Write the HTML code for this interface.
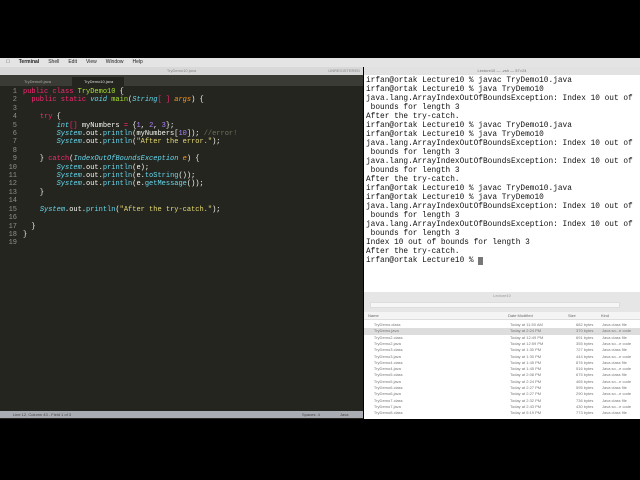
<!DOCTYPE html>
<html><head><meta charset="utf-8"><style>
*{margin:0;padding:0;box-sizing:border-box}
body{width:640px;height:480px;background:#000;position:relative;overflow:hidden;font-family:"Liberation Sans",sans-serif}
.abs{position:absolute}
#menu{left:0;top:58px;width:640px;height:9px;background:#e4e4e4;font-size:5px;line-height:9px;color:#222}
#menu span{margin-right:9px}
#ed{left:0;top:67px;width:363px;height:352px;background:#24251f}
#edtitle{left:0;top:0;width:363px;height:8px;background:#d8d8d8;font-size:4px;color:#888;text-align:center;line-height:8px}
#tabs{left:0;top:8px;width:363px;height:11px;background:#3a3b35}
.tab{position:absolute;top:2px;height:9px;font-size:4px;line-height:9px;color:#aaa;padding-left:12px}
#code{left:0;top:88px;width:363px;font-family:"Liberation Mono",monospace;font-size:7px;line-height:8.4px;color:#f8f8f2;white-space:pre}
.ln{display:inline-block;width:17px;text-align:right;color:#8f908a;margin-right:6px}
.k{color:#f92672}.t{color:#66d9ef;font-style:italic}.s{color:#e6db74}.n{color:#ae81ff}.g{color:#a6e22e}.c{color:#75715e}.o{color:#fd971f;font-style:italic}
#status{left:0;top:411px;width:363px;height:7px;background:#a9acb3;font-size:4px;line-height:7px;color:#444}
#term{left:364px;top:67px;width:276px;height:225px;background:#fff}
#ttitle{left:0;top:0;width:276px;height:8px;background:#e2e2e2;font-size:4px;color:#777;text-align:center;line-height:8px}
#ttext{left:366px;top:77px;font-family:"Liberation Mono",monospace;font-size:7.8px;line-height:9px;color:#111;white-space:pre}
#fin{left:364px;top:292px;width:276px;height:127px;background:#fff}
#fhead{left:0;top:0;width:276px;height:20px;background:#e6e6e6}
#fcol{left:0;top:20px;width:276px;height:8px;background:#f4f4f4;border-bottom:1px solid #ddd;font-size:4px;line-height:8px;color:#666}
.row{position:absolute;left:0;width:276px;height:6.3px;font-size:4px;line-height:6.3px;color:#777;white-space:pre}
.row b{font-weight:normal;position:absolute;left:146px}
.row i{font-style:normal;position:absolute;left:212px}
.row u{text-decoration:none;position:absolute;left:238px}
</style></head><body>
<div id="menu" class="abs"><span style="margin-left:6px">&#63743;</span><span style="font-weight:bold">Terminal</span><span>Shell</span><span>Edit</span><span>View</span><span>Window</span><span>Help</span></div>
<div id="ed" class="abs">
<div id="edtitle" class="abs">TryDemo10.java<span style="position:absolute;right:3px">UNREGISTERED</span></div>
<div id="tabs" class="abs"><div class="tab" style="left:12px;width:60px">TryDemo9.java</div><div class="tab" style="left:72px;width:52px;background:#24251f;color:#ddd">TryDemo10.java</div></div>
</div>
<div id="code" class="abs"><span class="ln">1</span><span class="k">public class</span> <span class="g">TryDemo10</span> {
<span class="ln">2</span>  <span class="k">public static</span> <span class="t">void</span> <span class="g">main</span>(<span class="t">String</span><span class="k">[ ]</span> <span class="o">args</span>) {
<span class="ln">3</span>
<span class="ln">4</span>    <span class="k">try</span> {
<span class="ln">5</span>        <span class="t">int</span><span class="k">[]</span> myNumbers <span class="k">=</span> {<span class="n">1</span>, <span class="n">2</span>, <span class="n">3</span>};
<span class="ln">6</span>        <span class="t">System</span>.out.<span class="t" style="font-style:normal">println</span>(myNumbers[<span class="n">10</span>]); <span class="c">//error!</span>
<span class="ln">7</span>        <span class="t">System</span>.out.<span class="t" style="font-style:normal">println</span>(<span class="s">"After the error."</span>);
<span class="ln">8</span>
<span class="ln">9</span>    } <span class="k">catch</span>(<span class="t">IndexOutOfBoundsException</span> <span class="o">e</span>) {
<span class="ln">10</span>        <span class="t">System</span>.out.<span class="t" style="font-style:normal">println</span>(e);
<span class="ln">11</span>        <span class="t">System</span>.out.<span class="t" style="font-style:normal">println</span>(e.<span class="t" style="font-style:normal">toString</span>());
<span class="ln">12</span>        <span class="t">System</span>.out.<span class="t" style="font-style:normal">println</span>(e.<span class="t" style="font-style:normal">getMessage</span>());
<span class="ln">13</span>    }
<span class="ln">14</span>
<span class="ln">15</span>    <span class="t">System</span>.out.<span class="t" style="font-style:normal">println</span>(<span class="s">"After the try-catch."</span>);
<span class="ln">16</span>
<span class="ln">17</span>  }
<span class="ln">18</span>}
<span class="ln">19</span></div>
<div id="status" class="abs"><span style="margin-left:13px">Line 12, Column 43 - Field 1 of 3</span><span style="position:absolute;left:302px">Spaces: 4</span><span style="position:absolute;left:340px">Java</span></div>
<div id="term" class="abs"><div id="ttitle" class="abs">Lecture10 — -zsh — 57×24</div></div>
<div id="ttext" class="abs">irfan@ortak Lecture10 % javac TryDemo10.java
irfan@ortak Lecture10 % java TryDemo10
java.lang.ArrayIndexOutOfBoundsException: Index 10 out of
 bounds for length 3
After the try-catch.
irfan@ortak Lecture10 % javac TryDemo10.java
irfan@ortak Lecture10 % java TryDemo10
java.lang.ArrayIndexOutOfBoundsException: Index 10 out of
 bounds for length 3
java.lang.ArrayIndexOutOfBoundsException: Index 10 out of
 bounds for length 3
After the try-catch.
irfan@ortak Lecture10 % javac TryDemo10.java
irfan@ortak Lecture10 % java TryDemo10
java.lang.ArrayIndexOutOfBoundsException: Index 10 out of
 bounds for length 3
java.lang.ArrayIndexOutOfBoundsException: Index 10 out of
 bounds for length 3
Index 10 out of bounds for length 3
After the try-catch.
irfan@ortak Lecture10 % <span style="background:#777">&nbsp;</span></div>
<div id="fin" class="abs">
<div id="fhead" class="abs"><div style="position:absolute;top:1px;width:276px;text-align:center;font-size:4px;color:#999">Lecture10</div>
<div style="position:absolute;left:6px;top:10px;width:250px;height:6px;background:#f6f6f6;border:1px solid #ddd"></div></div>
<div id="fcol" class="abs"><span style="margin-left:4px">Name</span><span style="position:absolute;left:144px">Date Modified</span><span style="position:absolute;left:204px">Size</span><span style="position:absolute;left:237px">Kind</span></div>
<div class="row" style="top:30px">         TryDemo.class<b>Today at 11:50 AM</b><i>682 bytes</i><u>Java class file</u></div>
<div class="row" style="top:36.3px;background:#ddd">         TryDemo.java<b>Today at 2:24 PM</b><i>370 bytes</i><u>Java so...e code</u></div>
<div class="row" style="top:42.6px">         TryDemo2.class<b>Today at 12:49 PM</b><i>691 bytes</i><u>Java class file</u></div>
<div class="row" style="top:48.9px">         TryDemo2.java<b>Today at 12:59 PM</b><i>355 bytes</i><u>Java so...e code</u></div>
<div class="row" style="top:55.2px">         TryDemo3.class<b>Today at 1:30 PM</b><i>727 bytes</i><u>Java class file</u></div>
<div class="row" style="top:61.5px">         TryDemo3.java<b>Today at 1:30 PM</b><i>444 bytes</i><u>Java so...e code</u></div>
<div class="row" style="top:67.8px">         TryDemo4.class<b>Today at 1:45 PM</b><i>876 bytes</i><u>Java class file</u></div>
<div class="row" style="top:74.1px">         TryDemo4.java<b>Today at 1:45 PM</b><i>516 bytes</i><u>Java so...e code</u></div>
<div class="row" style="top:80.4px">         TryDemo5.class<b>Today at 2:08 PM</b><i>675 bytes</i><u>Java class file</u></div>
<div class="row" style="top:86.7px">         TryDemo5.java<b>Today at 2:24 PM</b><i>465 bytes</i><u>Java so...e code</u></div>
<div class="row" style="top:93px">         TryDemo6.class<b>Today at 2:27 PM</b><i>595 bytes</i><u>Java class file</u></div>
<div class="row" style="top:99.3px">         TryDemo6.java<b>Today at 2:27 PM</b><i>290 bytes</i><u>Java so...e code</u></div>
<div class="row" style="top:105.6px">         TryDemo7.class<b>Today at 2:32 PM</b><i>736 bytes</i><u>Java class file</u></div>
<div class="row" style="top:111.9px">         TryDemo7.java<b>Today at 2:43 PM</b><i>430 bytes</i><u>Java so...e code</u></div>
<div class="row" style="top:118.2px">         TryDemo8.class<b>Today at 5:19 PM</b><i>773 bytes</i><u>Java class file</u></div>
</div>
</body></html>
